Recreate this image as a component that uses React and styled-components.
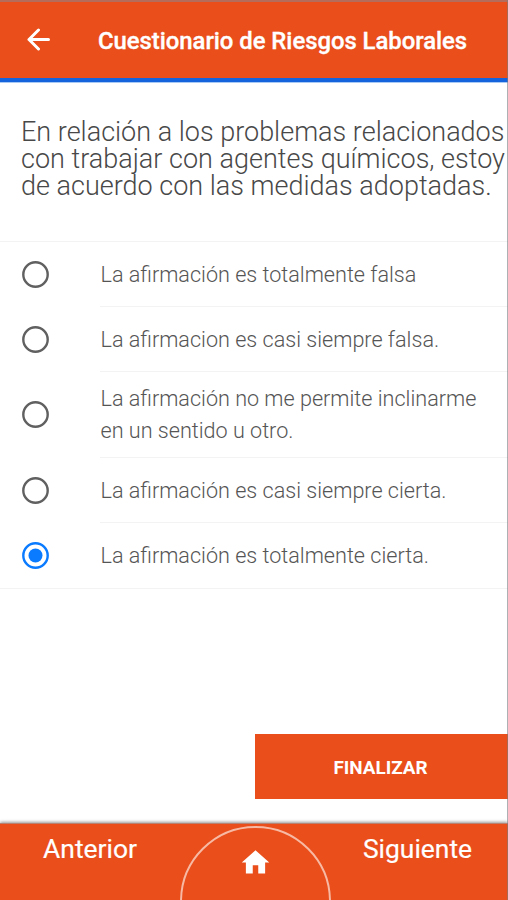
import React from 'react';
import styled, { createGlobalStyle } from 'styled-components';

const Global = createGlobalStyle`
  * { box-sizing: border-box; }
  body { margin: 0; background: #fff; font-family: Roboto, sans-serif; }
`;
const Screen = styled.div`
  position: relative; width: 508px; height: 900px; display: flex; flex-direction: column; overflow: hidden; background: #fff;
  &::after { content: ''; position: absolute; top: 0; right: 0; bottom: 0; width: 1px; background: rgba(120, 125, 130, .6); }
`;
const Header = styled.header`
  height: 82px; flex: none; display: flex; align-items: center; background: #e94e1b; color: #fff;
  border-top: 2px solid #b56c5b; border-bottom: 4px solid #1463dc; padding-left: 27px; box-shadow: 0 1px 0 #a9c9f5;
`;
const BackIcon = styled.svg`
  width: 23px; height: 23px; flex: none; margin-bottom: 2px; fill: none; stroke: #fff; stroke-width: 3; stroke-linecap: round; stroke-linejoin: round;
`;
const Title = styled.h1`
  margin: 2px 0 0 48px; font-size: 23.9px; line-height: 30px; font-weight: 500; white-space: nowrap;
  letter-spacing: -.04px; -webkit-text-stroke: .35px #fff;
`;
const Question = styled.p`
  margin: 0; height: 159px; flex: none; padding: 37px 0 0 21px; font-size: 27px; line-height: 27px; font-weight: 300; color: #484848; white-space: nowrap;
`;
const Line = styled.span`
  display: block; width: max-content;
`;
const Options = styled.div`
  flex: none; border-top: 1px solid #f3f3f3; border-bottom: 1px solid #f3f3f3;
`;
const Option = styled.label`
  display: flex; align-items: center; height: ${p => p.$height}px; padding-left: 22px;
`;
const Radio = styled.span`
  width: 27px; height: 27px; flex: none; margin-bottom: 1px; display: block;
  svg { display: block; }
`;
const Answer = styled.span`
  margin-left: 51px; flex: 1; align-self: stretch; display: flex; flex-direction: column; justify-content: center;
  padding: ${p => p.$single ? 1 : 0}px 0 0 .5px; font-size: 21.6px; line-height: 32px; font-weight: 300; color: #555; white-space: nowrap;
  border-bottom: 1px solid ${p => p.$last ? 'transparent' : '#f3f3f3'};
`;
const Finish = styled.button`
  margin: auto 0 24px auto; width: 253px; height: 65px; flex: none; border: 0; background: #e94e1b; color: #fff;
  font: 700 18.9px Roboto, sans-serif; padding: 2px 2px 0 0;
`;
const Footer = styled.footer`
  height: 77px; flex: none; background: #e94e1b; color: #fff; display: grid; grid-template-columns: 180px 150px 175px;
  border-top: 1px solid #b88272; box-shadow: 0 -1px 3px #999; overflow: hidden;
`;
const Nav = styled.span`
  padding-top: 8px; font-size: 26.4px; line-height: 34px; text-align: center; -webkit-text-stroke: .2px #fff;
`;
const Home = styled.div`
  margin-top: 2px; width: 151px; height: 151px; border: 2px solid #f7b9a3; border-radius: 50%; display: flex; justify-content: center; padding-top: 18px;
`;
const answers = [
  { lines: ['La afirmación es totalmente falsa'], height: 65 },
  { lines: ['La afirmacion es casi siempre falsa.'], height: 65 },
  { lines: ['La afirmación no me permite inclinarme', 'en un sentido u otro.'], height: 86 },
  { lines: ['La afirmación es casi siempre cierta.'], height: 65 },
  { lines: ['La afirmación es totalmente cierta.'], height: 65, checked: true },
];
export default function App() {
  return <><Global /><Screen>
    <Header>
      <BackIcon viewBox="0 0 23 23"><path d="M21.5 11.5H2M11.5 2L2 11.5 11.5 21" /></BackIcon>
      <Title>Cuestionario de Riesgos Laborales</Title>
    </Header>
    <Question>
      <Line>En relación a los problemas relacionados</Line>
      <Line>con trabajar con agentes químicos, estoy</Line>
      <Line>de acuerdo con las medidas adoptadas.</Line>
    </Question>
    <Options>
      {answers.map((a, i) => <Option key={i} $height={a.height}>
        <Radio>
          <svg width="27" height="27" viewBox="0 0 27 27">
            <circle cx="13.5" cy="13.5" r="12.2" fill="none" stroke={a.checked ? '#0a7aff' : '#606060'} strokeWidth="2.4" />
            {a.checked && <circle cx="13.5" cy="13.5" r="7" fill="#0a7aff" />}
          </svg>
        </Radio>
        <Answer $last={i === 4} $single={a.lines.length === 1}>{a.lines.map(l => <Line key={l}>{l}</Line>)}</Answer>
      </Option>)}
    </Options>
    <Finish>FINALIZAR</Finish>
    <Footer>
      <Nav>Anterior</Nav>
      <Home><svg width="33" height="33" viewBox="0 0 24 24"><path fill="#fff" d="M10 20v-6h4v6h5v-8h3L12 3 2 12h3v8z" /></svg></Home>
      <Nav>Siguiente</Nav>
    </Footer>
  </Screen></>;
}
